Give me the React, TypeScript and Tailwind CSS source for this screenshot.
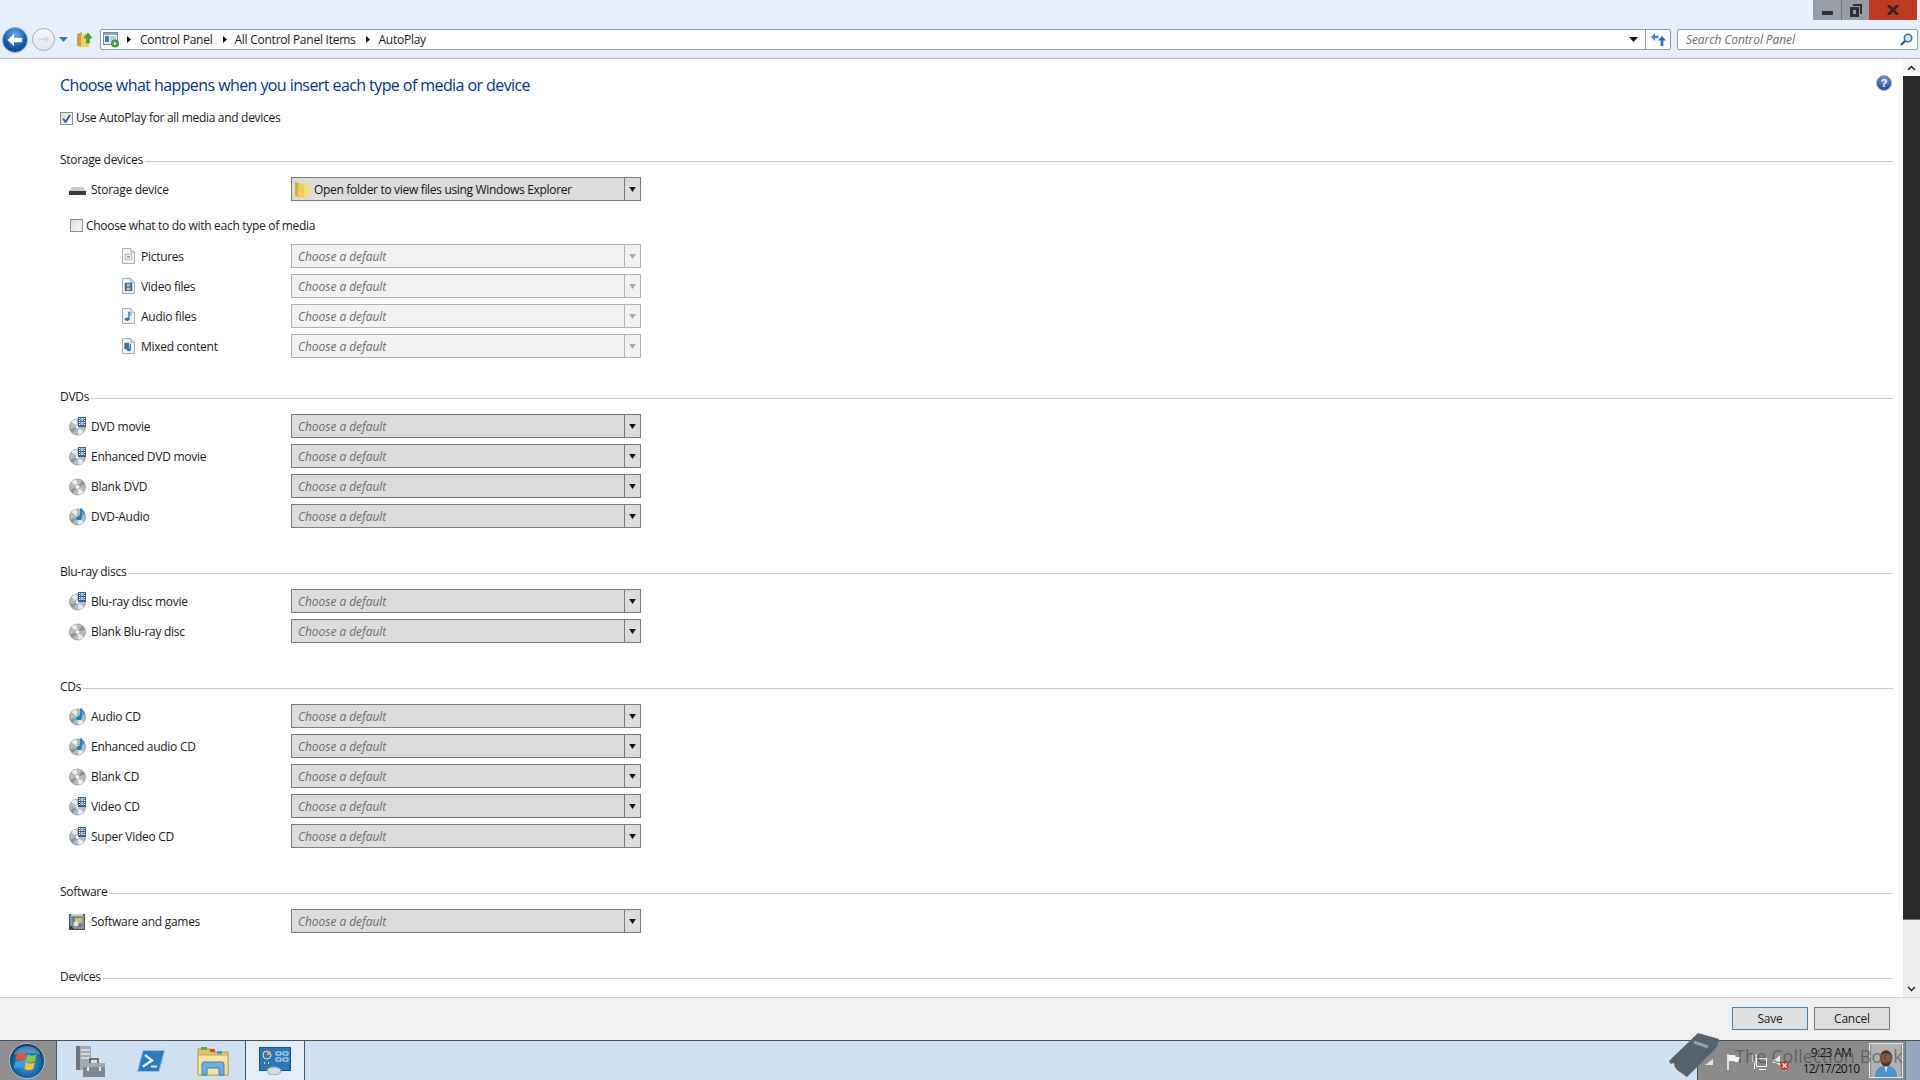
import React from 'react';

const Triangle: React.FC<{ className?: string }> = ({ className }) => (
  <svg width="9" height="5" viewBox="0 0 9 5" className={className}>
    <path d="M0 0h9L4.5 5z" fill="currentColor" />
  </svg>
);

const BreadArrow: React.FC<{ className?: string }> = ({ className }) => (
  <svg width="4" height="7" viewBox="0 0 4 7" className={`shrink-0 ${className ?? ''}`}>
    <path d="M0 0l4 3.5L0 7z" fill="#111" />
  </svg>
);

const BackButton: React.FC = () => (
  <svg width="26" height="26" viewBox="0 0 26 26">
    <defs>
      <radialGradient id="backFill" cx="50%" cy="30%" r="75%">
        <stop offset="0" stopColor="#6fb0ea" />
        <stop offset="0.55" stopColor="#1b62b8" />
        <stop offset="1" stopColor="#0a3f8c" />
      </radialGradient>
    </defs>
    <circle cx="13" cy="13" r="12.5" fill="url(#backFill)" stroke="#9db4cf" />
    <path d="M5.5 13L12 6.8v3.900h8.200v4.600H12v3.900z" fill="#fff" />
  </svg>
);

const ForwardButton: React.FC = () => (
  <svg width="23" height="23" viewBox="0 0 23 23">
    <defs>
      <linearGradient id="fwdFill" x1="0" y1="0" x2="0" y2="1">
        <stop offset="0" stopColor="#f7f9fb" />
        <stop offset="1" stopColor="#dfe5ec" />
      </linearGradient>
    </defs>
    <circle cx="11.5" cy="11.5" r="11" fill="url(#fwdFill)" stroke="#a0acba" />
    <path d="M6 11.500h10M13 9l3 2.500-3 2.500" stroke="#d0d6dd" strokeWidth="1.500" fill="none" />
  </svg>
);

const FolderUp: React.FC = () => (
  <svg width="16" height="17" viewBox="0 0 16 17">
    <path d="M0 3l5-2v15l-5-1z" fill="#c9a33f" />
    <path d="M4 3h8v13H4z" fill="#f2d265" />
    <path d="M11 2l4 5h-2.500v5h-3V7H7z" fill="#43a53a" stroke="#2c7d26" strokeWidth="0.500" />
  </svg>
);

const AddressIcon: React.FC = () => (
  <svg width="17" height="16" viewBox="0 0 17 16">
    <rect x="0.500" y="0.500" width="14" height="12" fill="#eef3f8" stroke="#7d8b99" />
    <rect x="1" y="1" width="13" height="2" fill="#8fa5bc" />
    <rect x="2" y="4" width="4" height="6" fill="#3f7fbf" />
    <path d="M7 5h6M7 7h6M7 9h4" stroke="#8ea0b2" />
    <circle cx="12" cy="11.500" r="4" fill="#3a9c3a" />
    <path d="M10.800 9.500l3 2-3 2z" fill="#fff" />
  </svg>
);

const RefreshIcon: React.FC = () => (
  <svg width="15" height="13" viewBox="0 0 15 13">
    <path d="M0 4l4-4v2.800h3.500v2.400H4V8z" fill="#4a83c4" />
    <path d="M11 3l4 4.500h-2.700V13H9.700V7.500H7z" fill="#2a69ae" />
  </svg>
);

const SearchIcon: React.FC = () => (
  <svg width="13" height="13" viewBox="0 0 13 13">
    <circle cx="8" cy="5" r="3.700" fill="#dcebf8" stroke="#2f73b5" strokeWidth="1.600" />
    <path d="M5.200 7.800L1 12" stroke="#1f5d99" strokeWidth="2" />
  </svg>
);

const HelpIcon: React.FC = () => (
  <svg width="16" height="16" viewBox="0 0 16 16" className="mr-[1px] mt-[16px] shrink-0">
    <defs>
      <radialGradient id="helpFill" cx="50%" cy="30%" r="70%">
        <stop offset="0" stopColor="#7d9fe0" />
        <stop offset="1" stopColor="#1c3f94" />
      </radialGradient>
    </defs>
    <circle cx="8" cy="8" r="7.500" fill="url(#helpFill)" stroke="#a9b9d6" />
    <text x="8" y="12" textAnchor="middle" fontSize="11" fontWeight="700" fill="#fff" fontFamily="Liberation Sans, sans-serif">?</text>
  </svg>
);

const Disc: React.FC<{ kind?: 'blank' | 'film' | 'note' }> = ({ kind = 'blank' }) => (
  <svg width="19" height="19" viewBox="0 0 19 19" className="shrink-0">
    <circle cx="8.500" cy="10" r="8" fill="#b9bcbe" stroke="#8a8f92" strokeWidth="0.700" />
    <path d="M8.500 10L2.500 5a8 8 0 0 1 5-2.800zM8.500 10l6 5a8 8 0 0 1-5 2.800z" fill="#eceeef" />
    <path d="M8.500 10L1 12.500a8 8 0 0 0 3 3.500zM8.500 10L16 7.500a8 8 0 0 0-3-3.500z" fill="#8f9497" />
    <circle cx="8.500" cy="10" r="2.300" fill="#fff" stroke="#7f8487" strokeWidth="0.600" />
    {kind === 'film' && (
      <g>
        <rect x="9" y="0" width="8" height="10" fill="#3a5f8c" />
        <path d="M10 1h1v1h-1zM10 3h1v1h-1zM10 5h1v1h-1zM10 7h1v1h-1zM15 1h1v1h-1zM15 3h1v1h-1zM15 5h1v1h-1zM15 7h1v1h-1z" fill="#fff" />
        <rect x="11.500" y="1" width="3" height="3" fill="#a7c4e4" />
        <rect x="11.500" y="5" width="3" height="3" fill="#a7c4e4" />
      </g>
    )}
    {kind === 'note' && (
      <g>
        <path d="M12 1.500v9.500" stroke="#1783c9" strokeWidth="1.800" />
        <path d="M12 1.500c1 2.500 3.500 2.500 3 5" stroke="#1783c9" strokeWidth="1.200" fill="none" />
        <ellipse cx="10" cy="11" rx="2.800" ry="2.200" fill="#1783c9" />
      </g>
    )}
  </svg>
);

const DocIcon: React.FC<{ kind: 'picture' | 'video' | 'audio' | 'mixed' }> = ({ kind }) => (
  <svg width="13" height="16" viewBox="0 0 14 17" className="shrink-0">
    <path d="M0.500 0.500h9l4 4v12h-13z" fill="#f4f6f9" stroke="#9aa5b1" />
    <path d="M9.500 0.500v4h4" fill="#dde3ea" stroke="#9aa5b1" />
    {kind === 'picture' && (
      <g>
        <rect x="3.500" y="6.500" width="7" height="6" fill="#eef1f4" stroke="#a8b1bb" />
        <rect x="5.500" y="8.500" width="3" height="2" fill="#8b9ab0" />
      </g>
    )}
    {kind === 'video' && (
      <g>
        <rect x="3" y="5" width="8" height="9" fill="#44607f" />
        <path d="M5 6h4v3H5zM5 10h4v3H5z" fill="#a9c2dc" />
      </g>
    )}
    {kind === 'audio' && (
      <g>
        <path d="M7.500 4v8" stroke="#1f7cc0" strokeWidth="1.500" />
        <path d="M7.500 4c1 2 3 2 2.500 4" stroke="#1f7cc0" fill="none" />
        <ellipse cx="5.500" cy="12" rx="2.500" ry="1.900" fill="#1f7cc0" />
      </g>
    )}
    {kind === 'mixed' && (
      <g>
        <rect x="2.500" y="5" width="5" height="7" fill="#4a6a8c" />
        <path d="M9 6v6" stroke="#1f7cc0" strokeWidth="1.500" />
        <ellipse cx="7.500" cy="12.500" rx="2.200" ry="1.700" fill="#1f7cc0" />
      </g>
    )}
  </svg>
);

const DriveIcon: React.FC = () => (
  <svg width="17" height="9" viewBox="0 0 17 9" className="mt-[3px] shrink-0">
    <path d="M3 1h11l3 4v3H0V5z" fill="#c9cbcd" />
    <path d="M0 5h17v4H0z" fill="#3a3a3a" />
  </svg>
);

const GamesIcon: React.FC = () => (
  <svg width="16" height="17" viewBox="0 0 16 17" className="shrink-0">
    <rect x="0.500" y="1.500" width="15" height="15" fill="#8a949c" stroke="#49525a" />
    <path d="M2 1h12v2H2z" fill="#c4c9cd" />
    <rect x="3" y="4" width="10" height="10" fill="#6f8190" />
    <path d="M6 5h7v5H6z" fill="#d9c25e" />
    <circle cx="7" cy="11" r="2.500" fill="#dfe4e8" />
    <path d="M1 12l4 4H1z" fill="#2a3138" />
  </svg>
);

const SmallFolder: React.FC = () => (
  <svg width="15" height="17" viewBox="0 0 15 17" className="shrink-0">
    <path d="M0 1l6 2v14l-6-2z" fill="#d2ad3c" />
    <path d="M5 2h9v15H5z" fill="#f5dc7b" />
    <path d="M3 3l6 1v13l-6-2z" fill="#f0cb58" />
  </svg>
);

const Checkbox: React.FC<{ checked?: boolean }> = ({ checked }) => (
  <span className="flex h-[13px] w-[13px] shrink-0 items-center justify-center border border-[#8e8f8f] bg-[linear-gradient(135deg,#dcdcdc,#fbfbfb)]">
    {checked && (
      <svg width="9" height="9" viewBox="0 0 9 9">
        <path d="M1 4.500l2.500 3.500L8 1" stroke="#3a5b9c" strokeWidth="1.800" fill="none" />
      </svg>
    )}
  </span>
);

const Combo: React.FC<{ disabled?: boolean; icon?: boolean; text?: string }> = ({ disabled, icon, text }) => (
  <div
    className={
      disabled
        ? 'flex h-[24px] w-[350px] shrink-0 border border-[#b2b2b2] bg-[#f2f2f2]'
        : 'flex h-[24px] w-[350px] shrink-0 border border-[#7a7a7a] bg-[#dcdcdc]'
    }
  >
    {icon ? (
      <div className="flex flex-1 items-center gap-[4px] pl-[3px] text-[#111]">
        <SmallFolder />
        <span className="mt-[1px] tracking-[-0.32px]">{text}</span>
      </div>
    ) : (
      <div className="flex flex-1 items-center pl-[6px] pt-[1px] italic tracking-[-0.05px] text-[#6d6d6d]">Choose a default</div>
    )}
    <div
      className={
        disabled
          ? 'flex w-[16px] items-center justify-center border-l border-[#b2b2b2] text-[#a8a8a8]'
          : 'flex w-[16px] items-center justify-center border-l border-[#7a7a7a] text-[#111]'
      }
    >
      <Triangle className="scale-x-75" />
    </div>
  </div>
);

const Heading: React.FC<{ title: string }> = ({ title }) => (
  <div className="flex h-[16px] items-center gap-[2px]">
    <span className="tracking-[-0.3px] text-[#1a1a1a]">{title}</span>
    <div className="mt-[3px] h-px flex-1 bg-[#c9c9c9]" />
  </div>
);

const Row: React.FC<{ icon: React.ReactNode; label: string; combo?: React.ReactNode }> = ({ icon, label, combo }) => (
  <div className="flex h-[24px] items-center">
    <div className="flex w-[231px] items-center pl-[9px]">
      <span className="flex w-[22px] shrink-0 items-center">{icon}</span>
      <span className="mt-[1px] tracking-[-0.28px] text-[#1a1a1a]">{label}</span>
    </div>
    {combo ?? <Combo />}
  </div>
);

const SubRow: React.FC<{ kind: 'picture' | 'video' | 'audio' | 'mixed'; label: string }> = ({ kind, label }) => (
  <div className="flex h-[24px] items-center">
    <div className="flex w-[231px] items-center pl-[62px]">
      <span className="flex w-[19px] shrink-0 items-center">
        <DocIcon kind={kind} />
      </span>
      <span className="mt-[1px] tracking-[-0.28px] text-[#1a1a1a]">{label}</span>
    </div>
    <Combo disabled />
  </div>
);

const Section: React.FC<{ title: string; className?: string; children: React.ReactNode }> = ({
  title,
  className,
  children,
}) => (
  <section className={className}>
    <Heading title={title} />
    <div className="mt-[9px] flex flex-col gap-[6px]">{children}</div>
  </section>
);

const StartOrb: React.FC = () => (
  <svg width="36" height="36" viewBox="0 0 36 36">
    <defs>
      <radialGradient id="orbFill" cx="50%" cy="55%" r="55%">
        <stop offset="0" stopColor="#4aa9e6" />
        <stop offset="0.700" stopColor="#146aa8" />
        <stop offset="1" stopColor="#0b2c4c" />
      </radialGradient>
    </defs>
    <circle cx="18" cy="18" r="17.500" fill="url(#orbFill)" stroke="#c9d4dc" strokeWidth="0.800" />
    <path d="M8 11c3-1.500 6-1.500 9 0l-1.400 6.500c-3-1.500-6-1.500-9 0z" fill="#e8532b" />
    <path d="M18.500 11.500c3 1.500 6 1.500 9 0l-1.400 6.500c-3 1.500-6 1.500-9 0z" fill="#8cc43f" />
    <path d="M6.300 19c3-1.500 6-1.500 9 0l-1.400 6.500c-3-1.500-6-1.500-9 0z" fill="#3d9be0" />
    <path d="M16.800 19.500c3 1.500 6 1.500 9 0l-1.400 6.500c-3 1.500-6 1.500-9 0z" fill="#f7c22e" />
    <path d="M5 12a13 9 0 0 1 26 0c-6-3-20-3-26 0z" fill="#fff" opacity="0.250" />
  </svg>
);

const ServerIcon: React.FC = () => (
  <svg width="30" height="32" viewBox="0 0 30 32">
    <path d="M1 1h15v24H1z" fill="#a4aab0" />
    <path d="M1 1h4v24H1z" fill="#6f767c" />
    <path d="M6 4h9v2H6zM6 8h9v2H6zM6 12h9v2H6z" fill="#d5d9dc" />
    <path d="M8 18h22v14H8z" fill="#7f878e" />
    <path d="M8 18h22v4H8z" fill="#a1a8ae" />
    <path d="M15 18v-4h8v4" stroke="#4a5157" strokeWidth="1.500" fill="none" />
    <path d="M13 22v4M25 22v4" stroke="#e3e6e8" strokeWidth="2" />
  </svg>
);

const PowerShellIcon: React.FC = () => (
  <svg width="28" height="22" viewBox="0 0 28 22">
    <path d="M6 0.500h21.500L22 21.500H0.500z" fill="#2a7cc0" stroke="#8fc0e6" />
    <path d="M8 5l7 5.500-9 6" stroke="#fff" strokeWidth="2.200" fill="none" />
    <path d="M14 16.500h6" stroke="#cfe5f6" strokeWidth="2" />
  </svg>
);

const ExplorerIcon: React.FC = () => (
  <svg width="32" height="30" viewBox="0 0 32 30">
    <path d="M1 3h13l2 3h15v23H1z" fill="#e2c468" stroke="#b9994a" />
    <path d="M4 1h6v3H4z" fill="#4fae48" />
    <path d="M13 3h5v3h-5z" fill="#d6453a" />
    <path d="M20 5h5v3h-5z" fill="#3d9be0" />
    <path d="M1 9h30v20H1z" fill="#f6e39c" stroke="#c3a656" />
    <path d="M5 29V18q0-2 2-2h18q2 0 2 2v11h-5v-7H10v7z" fill="#6caee0" stroke="#3a7fb8" />
  </svg>
);

const ControlPanelIcon: React.FC = () => (
  <svg width="32" height="28" viewBox="0 0 32 28">
    <rect x="0.500" y="0.500" width="31" height="23" fill="#2b76b8" stroke="#1c5486" />
    <circle cx="8" cy="8" r="4" fill="none" stroke="#dcecf8" />
    <path d="M8 4a4 4 0 0 1 4 4H8z" fill="#f2a33a" />
    <path d="M17 5h5v3h-5zM24 5h5v3h-5zM17 11h5v3h-5zM24 11h5v3h-5z" fill="#2b76b8" stroke="#cfe5f6" />
    <path d="M5 16h1M9 16h1" stroke="#f7d36b" strokeWidth="2" />
    <ellipse cx="15" cy="24" rx="7" ry="4" fill="#d7dadc" stroke="#9aa0a5" />
  </svg>
);

const BookMark: React.FC = () => (
  <svg width="50" height="48" viewBox="0 0 50 48">
    <path d="M29 0l21 6-2 8-32 32-12-10-4-8z" fill="#56626e" />
    <path d="M1 31q1 6 5 9l10 7 2-3-10-7q-3-3-3-7z" fill="#dde1e4" />
    <path d="M25 9l14 5" stroke="#949ea7" strokeWidth="3" />
  </svg>
);

const FlagIcon: React.FC = () => (
  <svg width="15" height="16" viewBox="0 0 15 16">
    <path d="M1 0v16" stroke="#fff" strokeWidth="1.500" />
    <path d="M2 1h6l1 2h5l-3 4 1 1H8L7 7H2z" fill="#f5f5f5" />
  </svg>
);

const NetworkIcon: React.FC = () => (
  <svg width="15" height="16" viewBox="0 0 15 16">
    <path d="M4.500 4.500h10v8h-10zM7 15.500h7" fill="none" stroke="#fff" />
    <path d="M1 0v8h3V0M2.500 8v7" fill="none" stroke="#fff" />
  </svg>
);

const SpeakerIcon: React.FC = () => (
  <svg width="16" height="16" viewBox="0 0 16 16">
    <path d="M0 5h3l4-4v11L3 9H0z" fill="#e8e8e8" />
    <circle cx="11.500" cy="11.500" r="4.300" fill="#dc2b33" />
    <path d="M9.500 9.500l4 4M13.500 9.500l-4 4" stroke="#fff" strokeWidth="1.500" />
  </svg>
);

const Avatar: React.FC = () => (
  <svg width="34" height="35" viewBox="0 0 34 38" className="border border-[#e8e8e8]">
    <rect width="34" height="38" fill="#b0b2b4" />
    <path d="M4 38q1-13 13-13t13 13z" fill="#4d94cc" />
    <path d="M15 25h4l-2 8z" fill="#d8e9f6" />
    <ellipse cx="17" cy="16" rx="7" ry="9" fill="#8a5a3c" />
    <path d="M10 13q7-10 14 0l-2-1q-5-3-10 0z" fill="#3d2a1c" />
    <path d="M11 19q6 7 12 0q-1 7-6 7t-6-7z" fill="#4a3020" />
  </svg>
);

export default function App() {
  return (
    <div className="flex h-[1080px] w-[1920px] flex-col overflow-hidden bg-white font-['Open_Sans','Liberation_Sans',sans-serif] text-[12px] leading-none">
      <header className="h-[59px] shrink-0 border-b border-[#a9b4c2] bg-[#e8effc]">
        <div className="flex h-[29px] justify-end pr-[3px]">
          <div className="flex h-[20px] w-[104px]">
            <div className="flex w-[29px] items-end justify-center border-r border-[#6f7680] bg-[#979da6] pb-[5px]">
              <div className="h-[4px] w-[11px] bg-[#2d3138]" />
            </div>
            <div className="flex w-[27px] items-center justify-center bg-[#979da6]">
              <svg width="12" height="13" viewBox="0 0 12 13">
                <path d="M3 0h9v10h-2V2H3z" fill="#2d3138" />
                <path d="M0 3h9v10H0zM3 6v4h3V6z" fill="#2d3138" fillRule="evenodd" />
              </svg>
            </div>
            <div className="flex w-[48px] items-center justify-center bg-[#c03a22]">
              <svg width="12" height="10" viewBox="0 0 12 10">
                <path d="M1 0l10 10M11 0L1 10" stroke="#3a2420" strokeWidth="3" fill="none" />
              </svg>
            </div>
          </div>
        </div>
        <div className="relative flex h-[21px] items-center">
          <div className="flex w-[100px] shrink-0 items-center">
            <span className="ml-[2px]">
              <BackButton />
            </span>
            <span className="ml-[4px]">
              <ForwardButton />
            </span>
            <Triangle className="ml-[4px] text-[#2f7ab8]" />
            <span className="ml-[9px]">
              <FolderUp />
            </span>
          </div>
          <div className="flex h-[21px] w-[1571px] shrink-0 items-center rounded-[2px] border border-[#8e9aa8] bg-white">
            <span className="ml-[2px]">
              <AddressIcon />
            </span>
            <div className="ml-[7px] flex flex-1 items-center tracking-[-0.25px] text-[#1a1a1a]">
              <BreadArrow />
              <span className="ml-[9px]">Control Panel</span>
              <BreadArrow className="ml-[11px]" />
              <span className="ml-[7px]">All Control Panel Items</span>
              <BreadArrow className="ml-[11px]" />
              <span className="ml-[8px]">AutoPlay</span>
            </div>
            <Triangle className="mr-[7px] text-[#111]" />
            <div className="flex h-full w-[25px] items-center justify-center border-l border-[#8e9aa8]">
              <RefreshIcon />
            </div>
          </div>
          <div className="ml-[6px] flex h-[21px] w-[241px] items-center justify-between rounded-[2px] border border-[#8e9aa8] bg-white pl-[8px] pr-[4px] italic tracking-[-0.1px] text-[#6d6d6d]">
            <span>Search Control Panel</span>
            <SearchIcon />
          </div>
        </div>
      </header>

      <div className="flex min-h-0 flex-1">
        <main className="min-w-0 flex-1 overflow-hidden pl-[60px] pr-[10px]">
          <div className="flex justify-between">
            <h1 className="mt-[15px] flex h-[22px] items-center text-[16px] font-normal tracking-[-0.58px] text-[#003399]">
              Choose what happens when you insert each type of media or device
            </h1>
            <HelpIcon />
          </div>
          <label className="mt-[15px] flex h-[14px] items-center gap-[3px] tracking-[-0.3px] text-[#1a1a1a]">
            <Checkbox checked />
            Use AutoPlay for all media and devices
          </label>

          <section className="mt-[27px]">
            <Heading title="Storage devices" />
            <div className="mt-[9px]">
              <Row icon={<DriveIcon />} label="Storage device" combo={<Combo icon text="Open folder to view files using Windows Explorer" />} />
            </div>
            <label className="ml-[10px] mt-[18px] flex h-[13px] items-center gap-[3px] tracking-[-0.3px] text-[#1a1a1a]">
              <Checkbox />
              Choose what to do with each type of media
            </label>
            <div className="mt-[12px] flex flex-col gap-[6px]">
              <SubRow kind="picture" label="Pictures" />
              <SubRow kind="video" label="Video files" />
              <SubRow kind="audio" label="Audio files" />
              <SubRow kind="mixed" label="Mixed content" />
            </div>
          </section>

          <Section title="DVDs" className="mt-[31px]">
            <Row icon={<Disc kind="film" />} label="DVD movie" />
            <Row icon={<Disc kind="film" />} label="Enhanced DVD movie" />
            <Row icon={<Disc />} label="Blank DVD" />
            <Row icon={<Disc kind="note" />} label="DVD-Audio" />
          </Section>

          <Section title="Blu-ray discs" className="mt-[36px]">
            <Row icon={<Disc kind="film" />} label="Blu-ray disc movie" />
            <Row icon={<Disc />} label="Blank Blu-ray disc" />
          </Section>

          <Section title="CDs" className="mt-[36px]">
            <Row icon={<Disc kind="note" />} label="Audio CD" />
            <Row icon={<Disc kind="note" />} label="Enhanced audio CD" />
            <Row icon={<Disc />} label="Blank CD" />
            <Row icon={<Disc kind="film" />} label="Video CD" />
            <Row icon={<Disc kind="film" />} label="Super Video CD" />
          </Section>

          <Section title="Software" className="mt-[36px]">
            <Row icon={<GamesIcon />} label="Software and games" />
          </Section>

          <div className="mt-[36px]">
            <Heading title="Devices" />
          </div>
        </main>

        <div className="flex w-[17px] shrink-0 flex-col bg-[#efefef]">
          <div className="flex h-[17px] items-center justify-center bg-[#f7f7f7]">
            <svg width="9" height="6" viewBox="0 0 9 6">
              <path d="M1 5l3.500-3.500L8 5" stroke="#222" strokeWidth="1.500" fill="none" />
            </svg>
          </div>
          <div className="h-[844px] border-b border-[#777] bg-[#2a2a2a]" />
          <div className="flex-1" />
          <div className="flex h-[17px] items-center justify-center">
            <svg width="9" height="6" viewBox="0 0 9 6">
              <path d="M1 1l3.500 3.500L8 1" stroke="#222" strokeWidth="1.500" fill="none" />
            </svg>
          </div>
        </div>
      </div>

      <footer className="flex h-[43px] shrink-0 items-start justify-end gap-[6px] border-t border-[#d3d3d3] bg-[#f0f0f0] pr-[30px] pt-[9px] text-[#1a1a1a]">
        <button className="h-[23px] w-[76px] border border-[#3f86b5] bg-[#e0e0e0] tracking-[-0.2px]">Save</button>
        <button className="h-[23px] w-[76px] border border-[#7a7a7a] bg-[#dedede] tracking-[-0.2px]">Cancel</button>
      </footer>

      <div className="relative flex h-[40px] shrink-0 border-t border-[#44515e] bg-[#cfe0f1]">
        <div className="flex w-[57px] items-center justify-start border-r border-[#44515e] bg-[#8f8f8f] pl-[9px]">
          <StartOrb />
        </div>
        <div className="flex w-[61px] items-center pl-[18px]">
          <ServerIcon />
        </div>
        <div className="flex w-[61px] items-center pl-[19px]">
          <PowerShellIcon />
        </div>
        <div className="flex w-[66px] items-center pl-[18px]">
          <ExplorerIcon />
        </div>
        <div className="flex w-[60px] items-center justify-center border-x border-[#44515e] bg-[#e4edf7]">
          <ControlPanelIcon />
        </div>
        <div className="ml-auto flex w-[208px] items-center border-l border-[#44515e] bg-[#8b8b8b]">
          <svg width="8" height="6" viewBox="0 0 8 6" className="ml-[7px] mt-[3px] shrink-0">
            <path d="M8 0v6H0z" fill="#e4e4e4" />
          </svg>
          <span className="ml-[14px] mt-[2px] flex">
            <FlagIcon />
          </span>
          <span className="ml-[10px] mt-[2px] flex">
            <NetworkIcon />
          </span>
          <span className="ml-[6px] mt-[2px] flex">
            <SpeakerIcon />
          </span>
          <div className="ml-[9px] flex w-[66px] flex-col items-center gap-[4px] tracking-[-0.7px] text-[#111]">
            <span>9:23 AM</span>
            <span>12/17/2010</span>
          </div>
          <div className="ml-auto mr-[2px]">
            <Avatar />
          </div>
        </div>
        <div className="w-[15px] border-l border-[#5f6f7e] bg-[#93a8bc]" />
        <div className="pointer-events-none absolute left-[1669px] top-[-8px]">
          <BookMark />
        </div>
        <span className="pointer-events-none absolute left-[1735px] top-[1px] text-[18px] leading-[28px] tracking-[0.1px] text-[#444]/60">
          The Collection Book
        </span>
      </div>
    </div>
  );
}
